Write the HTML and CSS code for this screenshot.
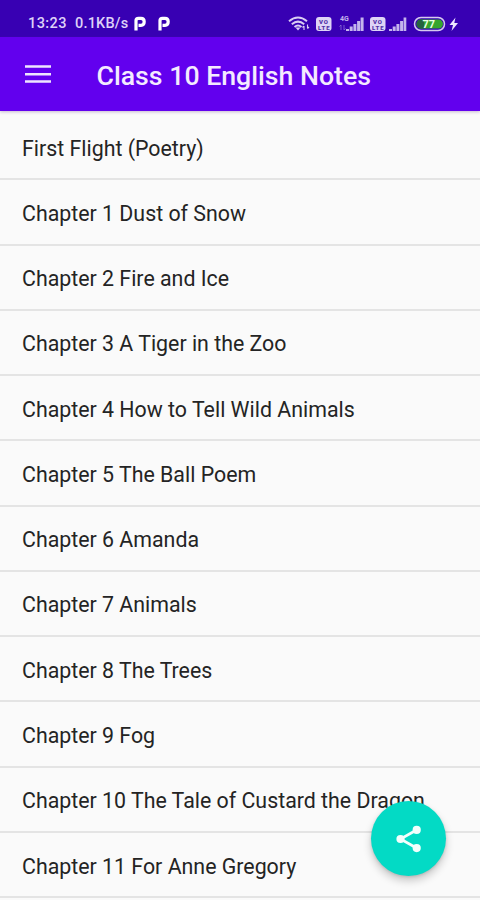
FILE: index.html
```html
<!DOCTYPE html>
<html lang="en">
<head>
<meta charset="utf-8">
<title>Class 10 English Notes</title>
<link rel="stylesheet" href="styles.css">
</head>
<body>
<div class="screen">
  <header class="status">
    <span class="clock">13:23</span>
    <span class="speed">0.1KB/s</span>
    <svg class="parking" width="12" height="15" viewBox="0 0 12 15"><path d="M2 14.500V4.500Q2 2.300 4.500 2.300H7Q10.200 2.300 10.200 5.800T7 9.300H4.500" fill="none" stroke="#fff" stroke-width="3.200"/></svg>
    <svg class="parking second" width="12" height="15" viewBox="0 0 12 15"><path d="M2 14.500V4.500Q2 2.300 4.500 2.300H7Q10.200 2.300 10.200 5.800T7 9.300H4.500" fill="none" stroke="#fff" stroke-width="3.200"/></svg>
    <svg class="indicators" width="180" height="20" viewBox="0 0 180 20">
      <g fill="none" stroke="#d9cdf3" stroke-width="2">
        <path d="M1 8.300Q10 .8 19 8.300M3.800 11.300Q10 6 16.200 11.300M6.500 14Q10 11 13.500 14"/>
        <path d="M16 17v-4m-1.500 1.500L16 13M19.500 11.500v4m1.500-1.500L19.500 15.500" stroke-width="1.100"/>
      </g>
      <path d="M7.500 14.500h5L10 17.500z" fill="#d9cdf3"/>
      <g fill="#ded4f6"><rect x="28" y="4" width="15.500" height="14" rx="3"/><rect x="82" y="4" width="15.500" height="14" rx="3"/></g>
      <g class="volte"><text x="31" y="10.500" textLength="9">VO</text><text x="30" y="16.500" textLength="11.500">LTE</text><text x="85" y="10.500" textLength="9">VO</text><text x="84" y="16.500" textLength="11.500">LTE</text></g>
      <text class="network" x="52" y="7.500">4G</text>
      <path d="M53 17v-5m-1.500 1.500L53 12M56 12v5m1.500-1.500L56 17" fill="none" stroke="#8e70d8" stroke-width=".8"/>
      <path d="M58 18v-2h3v2zm3.700 0v-4.500h3v4.500zm3.700 0v-7h3v7zm3.700 0V8h3v10zm3.500 0V4.500h3V18zM101 18v-2h3v2zm3.700 0v-4.500h3v4.500zm3.700 0v-7h3v7zm3.700 0V8h3v10zm3.500 0V4.500h2.700V18z" fill="#c5b4ed"/>
      <rect x="126.500" y="4.500" width="30" height="13" rx="6.500" fill="#3500b4" stroke="#d6caee" stroke-width="1.500"/>
      <path d="M133 6.500H150.500a4.500 4.500 0 0 1 0 9H133a4.500 4.500 0 0 1 0-9z" fill="#35a52d"/>
      <path d="M133 6.500h3v9h-3a4.500 4.500 0 0 1 0-9z" fill="#24633f"/>
      <text class="charge" x="134.500" y="15">77</text>
      <path d="M167.500 4.500L161.500 12H165L163.500 18 170 10H166.300z" fill="#eee7ff"/>
    </svg>
  </header>
  <div class="toolbar">
    <svg class="menu" width="26" height="20" viewBox="0 0 26 20"><path d="M0 2.500h26M0 10.200h26M0 17.500h26" stroke="#eee5ff" stroke-width="2.500"/></svg>
    <h1>Class 10 English Notes</h1>
  </div>
  <ul class="chapters">
    <li><span>First Flight (Poetry)</span></li>
    <li><span>Chapter 1 Dust of Snow</span></li>
    <li><span>Chapter 2 Fire and Ice</span></li>
    <li><span>Chapter 3 A Tiger in the Zoo</span></li>
    <li><span>Chapter 4 How to Tell Wild Animals</span></li>
    <li><span>Chapter 5 The Ball Poem</span></li>
    <li><span>Chapter 6 Amanda</span></li>
    <li><span>Chapter 7 Animals</span></li>
    <li><span>Chapter 8 The Trees</span></li>
    <li><span>Chapter 9 Fog</span></li>
    <li><span>Chapter 10 The Tale of Custard the Dragon</span></li>
    <li><span>Chapter 11 For Anne Gregory</span></li>
  </ul>
  <button class="share" aria-label="Share">
    <svg width="26" height="28" viewBox="0 0 26 28"><path d="M20.500 5L4.500 14l16 9" fill="none" stroke="#f3fffd" stroke-width="2.700"/><g fill="#f3fffd"><circle cx="20.700" cy="4.900" r="4.100"/><circle cx="4.500" cy="14" r="4.100"/><circle cx="20.700" cy="23.100" r="4.100"/></g></svg>
  </button>
</div>
</body>
</html>
```
FILE: styles.css
```css
* { box-sizing: border-box; }
body { margin: 0; font-family: Roboto, sans-serif; }
.screen { position: relative; width: 480px; height: 900px; overflow: hidden; background: #fafafa; }
.status { display: flex; align-items: center; height: 37px; padding: 10px 0 0 28px; background: #3800b3; color: #ded2f8; font-size: 14.5px; font-weight: 500; }
.clock { width: 47px; letter-spacing: .4px; }
.speed { width: 59px; white-space: nowrap; letter-spacing: .2px; }
.parking { display: block; flex: none; }
.second { margin-left: 12px; }
.indicators { margin-left: 118px; margin-top: -2px; flex: none; }
.volte { fill: #5030a5; font-size: 6px; font-weight: 900; }
.network { fill: #c5b4ed; font-size: 7px; font-weight: 700; }
.charge { fill: #e9ffe5; font-size: 11px; font-weight: 700; }
.toolbar { position: relative; display: flex; align-items: center; height: 74px; padding-left: 25px; background: #6200ee; box-shadow: 0 1px 3px #62358055; }
.menu { display: block; flex: none; }
h1 { margin: 3px 0 0 45.5px; color: #f4eaff; font-size: 26.7px; font-weight: 500; line-height: 32px; white-space: nowrap; }
.chapters { margin: 0; padding: 4px 0 0; list-style: none; }
.chapters li { display: flex; align-items: center; height: 65.28px; padding: 3px 0 0 22px; border-bottom: 2px solid #e4e4e4; color: #242424; font-size: 21.35px; white-space: nowrap; }
.share { position: absolute; left: 371px; top: 801px; display: flex; align-items: center; justify-content: center; width: 75px; height: 75px; padding: 0; border: 0; border-radius: 50%; background: #03dac5; box-shadow: 0 5px 9px #0003, 0 1px 3px #0002; }
```
